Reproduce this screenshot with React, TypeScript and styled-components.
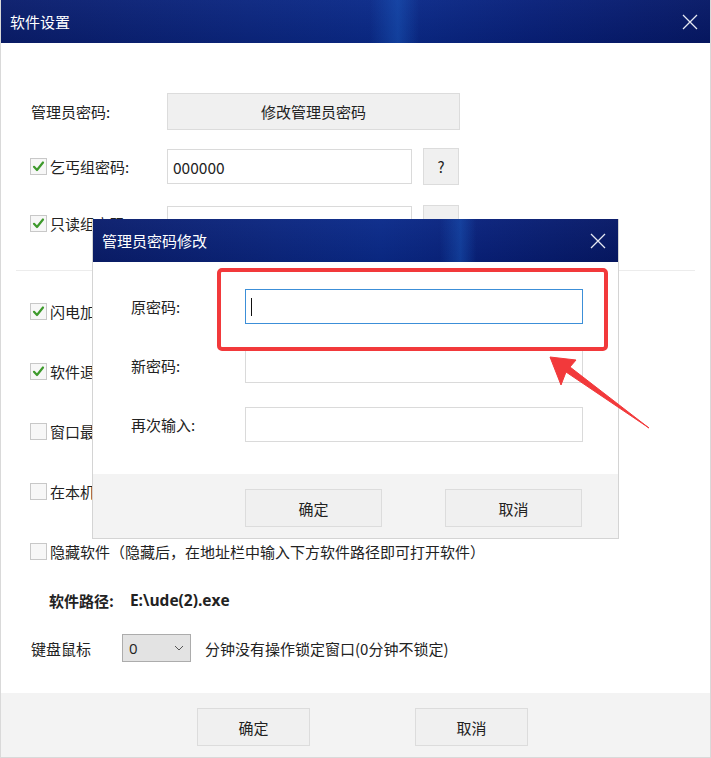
import React from "react";
import styled, { createGlobalStyle } from "styled-components";

const Global = createGlobalStyle`
  html, body { margin: 0; padding: 0; background: #fff; }
  body {
    font-family: "Microsoft YaHei", "Noto Sans CJK SC", "Noto Sans", sans-serif;
    font-size: 15px;
    color: #222;
  }
  * { box-sizing: border-box; }
`;

const Window = styled.div`
  position: relative;
  width: 711px;
  height: 758px;
  display: flex;
  flex-direction: column;
  border-left: 1px solid #d9d9d9;
  border-right: 1px solid #d9d9d9;
  border-bottom: 1px solid #d9d9d9;
  overflow: hidden;
`;

const TitleBar = styled.div<{ $band: string; $h: number }>`
  height: ${(p) => p.$h}px;
  flex: none;
  display: flex;
  align-items: center;
  justify-content: space-between;
  padding: 0 12px 0 9px;
  color: #fff;
  font-size: 15px;
  background:
    linear-gradient(
      90deg,
      rgba(30, 90, 190, 0) calc(${(p) => p.$band} - 4%),
      rgba(30, 100, 200, 0.4) ${(p) => p.$band},
      rgba(30, 90, 190, 0) calc(${(p) => p.$band} + 3%)
    ),
    linear-gradient(180deg, rgba(255,255,255,0.03), rgba(0,0,0,0.08)),
    linear-gradient(90deg, #0a1d6c 0%, #0b2680 35%, #0a2a8a 55%, #08207a 75%, #061866 100%);
`;

const TitleText = styled.span`
  line-height: 1;
`;

const CloseX = styled.svg`
  width: 16px;
  height: 16px;
  flex: none;
`;

const CloseIcon = () => (
  <CloseX viewBox="0 0 16 16">
    <path d="M1 1 L15 15 M15 1 L1 15" stroke="#e6e9f2" strokeWidth="1.3" fill="none" />
  </CloseX>
);

const Body = styled.div`
  flex: 1;
  display: flex;
  flex-direction: column;
  padding: 50px 15px 0 15px;
`;

const FormRow = styled.div<{ $mt?: number }>`
  display: flex;
  align-items: center;
  margin-top: ${(p) => p.$mt ?? 0}px;
  padding-left: 14px;
`;

const RowLabel = styled.div`
  width: 137px;
  display: flex;
  align-items: center;
  flex: none;
`;

const PlainLabel = styled.span`
  padding-left: 1px;
`;

const GrayButton = styled.div<{ $w: number; $h: number }>`
  width: ${(p) => p.$w}px;
  height: ${(p) => p.$h}px;
  display: flex;
  align-items: center;
  justify-content: center;
  background: #f0f0f0;
  border: 1px solid #dcdcdc;
  color: #222;
  flex: none;
`;

const TextField = styled.div<{ $w: number; $h: number; $focus?: boolean }>`
  width: ${(p) => p.$w}px;
  height: ${(p) => p.$h}px;
  border: 1px solid ${(p) => (p.$focus ? "#3c8fd8" : "#dadada")};
  background: #fff;
  display: flex;
  align-items: center;
  padding-left: 5px;
  flex: none;
  font-size: 15.5px;
`;

const Caret = styled.span`
  width: 1px;
  height: 18px;
  background: #111;
`;

const Spacer = styled.div<{ $w: number }>`
  width: ${(p) => p.$w}px;
  flex: none;
`;

const Box = styled.span`
  width: 17px;
  height: 17px;
  border: 1px solid #c8c8c8;
  background: #f7f7f7;
  display: inline-flex;
  align-items: center;
  justify-content: center;
  margin-right: 3px;
  flex: none;
`;

const Check = ({ on }: { on: boolean }) => (
  <Box>
    {on && (
      <svg width="13" height="13" viewBox="0 0 13 13">
        <path d="M2 6.8 L5 10 L11 2.5" stroke="#3e9a2c" strokeWidth="2.2" fill="none" strokeLinecap="round" strokeLinejoin="round" />
      </svg>
    )}
  </Box>
);

const Divider = styled.div`
  height: 1px;
  background: #ececec;
  margin-top: 28px;
`;

const OptionRow = styled.label<{ $mt: number }>`
  display: flex;
  align-items: center;
  height: 20px;
  margin-top: ${(p) => p.$mt}px;
  padding-left: 14px;
`;

const PathRow = styled.div`
  display: flex;
  align-items: center;
  height: 20px;
  margin-top: 29px;
  padding-left: 33px;
  font-weight: bold;
  gap: 16px;
`;

const PathValue = styled.span`
  font-family: "Segoe UI", "Open Sans", "Noto Sans", sans-serif;
  font-weight: 700;
  font-size: 15.5px;
`;

const LockRow = styled.div`
  display: flex;
  align-items: center;
  height: 28px;
  margin-top: 24px;
  padding-left: 15px;
`;

const LockLabel = styled.span`
  width: 91px;
  flex: none;
`;

const Select = styled.div`
  width: 69px;
  height: 28px;
  background: #e3e3e3;
  border: 1px solid #acacac;
  display: flex;
  align-items: center;
  justify-content: space-between;
  padding: 0 6px;
  font-family: "Segoe UI", "Open Sans", "Noto Sans", sans-serif;
  font-size: 15px;
  margin-right: 14px;
`;

const Footer = styled.div<{ $h: number; $gap: number; $pl: number }>`
  height: ${(p) => p.$h}px;
  flex: none;
  background: #f3f3f3;
  display: flex;
  align-items: flex-start;
  padding-top: 15px;
  padding-left: ${(p) => p.$pl}px;
  gap: ${(p) => p.$gap}px;
`;

const Dialog = styled.div`
  position: absolute;
  left: 91px;
  top: 219px;
  width: 527px;
  height: 320px;
  display: flex;
  flex-direction: column;
  background: #fff;
  border-left: 1px solid #d4d4d4;
  border-right: 1px solid #d4d4d4;
  border-bottom: 1px solid #d4d4d4;
`;

const DialogBody = styled.div`
  flex: 1;
  display: flex;
  flex-direction: column;
  padding-top: 27px;
  gap: 24px;
`;

const DialogRow = styled.div`
  display: flex;
  align-items: center;
  padding-left: 38px;
`;

const DialogLabel = styled.span`
  width: 114px;
  flex: none;
`;

const RedFrame = styled.div`
  position: absolute;
  left: 216px;
  top: 268px;
  width: 391px;
  height: 83px;
  border: 4px solid #f2393b;
  border-radius: 5px;
  pointer-events: none;
`;

const ArrowSvg = styled.svg`
  position: absolute;
  left: 539px;
  top: 350px;
  width: 120px;
  height: 90px;
  pointer-events: none;
`;

export default function App() {
  return (
    <>
      <Global />
      <Window>
        <TitleBar $band="56%" $h={43}>
          <TitleText>软件设置</TitleText>
          <CloseIcon />
        </TitleBar>
        <Body>
          <FormRow>
            <RowLabel>
              <PlainLabel>管理员密码:</PlainLabel>
            </RowLabel>
            <GrayButton $w={293} $h={37}>修改管理员密码</GrayButton>
          </FormRow>
          <FormRow $mt={18}>
            <RowLabel>
              <Check on />
              乞丐组密码:
            </RowLabel>
            <TextField $w={245} $h={35}>000000</TextField>
            <Spacer $w={11} />
            <GrayButton $w={36} $h={37}>?</GrayButton>
          </FormRow>
          <FormRow $mt={20}>
            <RowLabel>
              <Check on />
              只读组密码:
            </RowLabel>
            <TextField $w={245} $h={35} />
            <Spacer $w={11} />
            <GrayButton $w={36} $h={37} />
          </FormRow>
          <Divider />
          <OptionRow $mt={30}>
            <Check on />
            闪电加速
          </OptionRow>
          <OptionRow $mt={40}>
            <Check on />
            软件退出
          </OptionRow>
          <OptionRow $mt={40}>
            <Check on={false} />
            窗口最小化
          </OptionRow>
          <OptionRow $mt={40}>
            <Check on={false} />
            在本机开机时自动启动
          </OptionRow>
          <OptionRow $mt={40}>
            <Check on={false} />
            隐藏软件（隐藏后，在地址栏中输入下方软件路径即可打开软件）
          </OptionRow>
          <PathRow>
            <span>软件路径:</span>
            <PathValue>E:\ude(2).exe</PathValue>
          </PathRow>
          <LockRow>
            <LockLabel>键盘鼠标</LockLabel>
            <Select>
              <span>0</span>
              <svg width="10" height="6" viewBox="0 0 10 6">
                <path d="M1 1 L5 5 L9 1" stroke="#555" strokeWidth="1" fill="none" />
              </svg>
            </Select>
            <span>分钟没有操作锁定窗口(0分钟不锁定)</span>
          </LockRow>
        </Body>
        <Footer $h={64} $gap={105} $pl={196}>
          <GrayButton $w={113} $h={38}>确定</GrayButton>
          <GrayButton $w={113} $h={38}>取消</GrayButton>
        </Footer>

        <Dialog>
          <TitleBar $band="70%" $h={43}>
            <TitleText>管理员密码修改</TitleText>
            <CloseIcon />
          </TitleBar>
          <DialogBody>
            <DialogRow>
              <DialogLabel>原密码:</DialogLabel>
              <TextField $w={338} $h={35} $focus>
                <Caret />
              </TextField>
            </DialogRow>
            <DialogRow>
              <DialogLabel>新密码:</DialogLabel>
              <TextField $w={338} $h={35} />
            </DialogRow>
            <DialogRow>
              <DialogLabel>再次输入:</DialogLabel>
              <TextField $w={338} $h={35} />
            </DialogRow>
          </DialogBody>
          <Footer $h={64} $gap={63} $pl={152}>
            <GrayButton $w={137} $h={38}>确定</GrayButton>
            <GrayButton $w={137} $h={38}>取消</GrayButton>
          </Footer>
        </Dialog>

        <RedFrame />
        <ArrowSvg viewBox="540 350 120 90">
          <polygon
            points="550,357 576,360 570,367 649,428 566,372 561,385"
            fill="#f2393b"
            stroke="#f2393b"
            strokeWidth="1"
            strokeLinejoin="round"
          />
        </ArrowSvg>
      </Window>
    </>
  );
}
